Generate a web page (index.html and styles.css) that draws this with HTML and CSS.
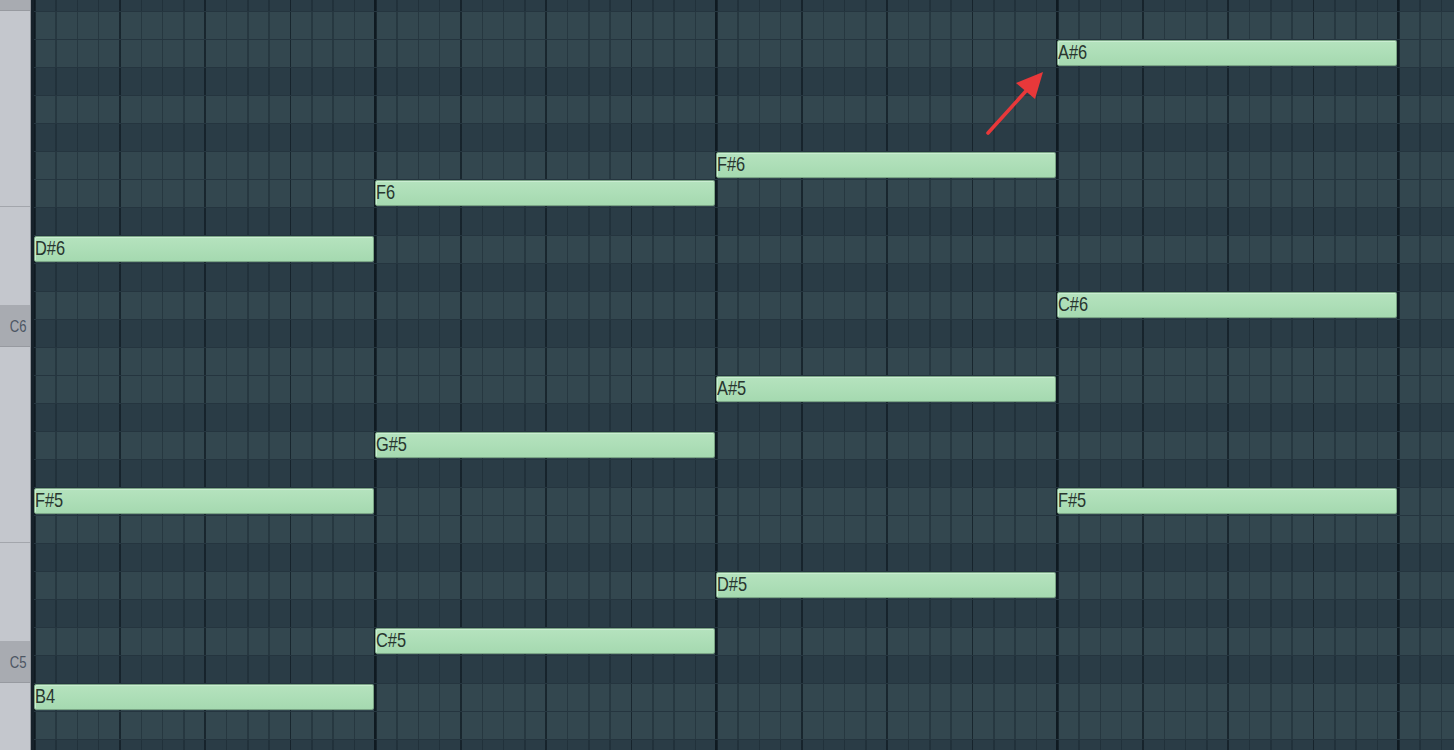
FILE: index.html
```html
<!DOCTYPE html>
<html lang="en">
<head>
<meta charset="utf-8">
<title>Piano roll</title>
<link rel="stylesheet" href="styles.css">
</head>
<body>
<div class="roll">
  <div class="keys">
    <div class="key c-key c-top"></div>
    <div class="key white upper"></div>
    <div class="key white lower"></div>
    <div class="key c-key"><span class="key-label">C6</span></div>
    <div class="key white upper"></div>
    <div class="key white lower"></div>
    <div class="key c-key"><span class="key-label">C5</span></div>
    <div class="key white rest"></div>
  </div>
  <div class="gutter"></div>
  <div class="grid">
    <div class="row dark" style="grid-row:1"></div>
    <div class="row" style="grid-row:2"></div>
    <div class="row" style="grid-row:3"></div>
    <div class="row dark" style="grid-row:4"></div>
    <div class="row" style="grid-row:5"></div>
    <div class="row dark" style="grid-row:6"></div>
    <div class="row" style="grid-row:7"></div>
    <div class="row" style="grid-row:8"></div>
    <div class="row dark" style="grid-row:9"></div>
    <div class="row" style="grid-row:10"></div>
    <div class="row dark" style="grid-row:11"></div>
    <div class="row" style="grid-row:12"></div>
    <div class="row dark" style="grid-row:13"></div>
    <div class="row" style="grid-row:14"></div>
    <div class="row" style="grid-row:15"></div>
    <div class="row dark" style="grid-row:16"></div>
    <div class="row" style="grid-row:17"></div>
    <div class="row dark" style="grid-row:18"></div>
    <div class="row" style="grid-row:19"></div>
    <div class="row" style="grid-row:20"></div>
    <div class="row dark" style="grid-row:21"></div>
    <div class="row" style="grid-row:22"></div>
    <div class="row dark" style="grid-row:23"></div>
    <div class="row" style="grid-row:24"></div>
    <div class="row dark" style="grid-row:25"></div>
    <div class="row" style="grid-row:26"></div>
    <div class="row" style="grid-row:27"></div>
    <div class="row dark" style="grid-row:28"></div>

    <div class="note" style="grid-row:10;grid-column:1"><span>D#6</span></div>
    <div class="note" style="grid-row:19;grid-column:1"><span>F#5</span></div>
    <div class="note" style="grid-row:26;grid-column:1"><span>B4</span></div>

    <div class="note" style="grid-row:8;grid-column:2"><span>F6</span></div>
    <div class="note" style="grid-row:17;grid-column:2"><span>G#5</span></div>
    <div class="note" style="grid-row:24;grid-column:2"><span>C#5</span></div>

    <div class="note" style="grid-row:7;grid-column:3"><span>F#6</span></div>
    <div class="note" style="grid-row:15;grid-column:3"><span>A#5</span></div>
    <div class="note" style="grid-row:22;grid-column:3"><span>D#5</span></div>

    <div class="note" style="grid-row:3;grid-column:4"><span>A#6</span></div>
    <div class="note" style="grid-row:12;grid-column:4"><span>C#6</span></div>
    <div class="note" style="grid-row:19;grid-column:4"><span>F#5</span></div>
  </div>
  <svg class="arrow" width="70" height="76" viewBox="0 0 70 76">
    <line x1="8" y1="69" x2="46" y2="27" stroke="#e8383a" stroke-width="3.6" stroke-linecap="round"/>
    <polygon points="63,8 36,19 55,35" fill="#e8383a"/>
  </svg>
</div>
</body>
</html>
```

FILE: styles.css
```css
html, body {
  margin: 0;
  padding: 0;
  width: 1454px;
  height: 750px;
  overflow: hidden;
  background: #33474f;
}

.roll {
  position: relative;
  display: flex;
  width: 1454px;
  height: 750px;
  overflow: hidden;
}

/* keyboard strip */
.keys {
  flex: 0 0 30px;
  display: flex;
  flex-direction: column;
  background: #c4c7cd;
  border-right: 1px solid #8d9299;
}

.key {
  box-sizing: border-box;
  flex: 0 0 auto;
}

.white {
  background: #c4c7cd;
}

.c-key {
  height: 42px;
  background: #a8abb1;
  border-bottom: 1px solid #979aa0;
  display: flex;
  align-items: center;
  justify-content: flex-end;
  padding-right: 4px;
  padding-top: 2px;
}

.c-top {
  height: 11px;
  padding-top: 0;
}

.upper {
  height: 196px;
  border-bottom: 1px solid #a3a6ac;
}

.lower {
  height: 98px;
}

.rest {
  flex: 1 1 auto;
}

.key-label {
  display: inline-block;
  font-family: "Liberation Sans", Arial, sans-serif;
  font-size: 16px;
  line-height: 16px;
  color: #4d5663;
  transform: scaleX(0.82);
  transform-origin: right center;
}

.gutter {
  flex: 0 0 3px;
  background: #16212a;
}

/* note grid */
.grid {
  flex: 1 1 auto;
  display: grid;
  grid-template-columns: repeat(5, 341px);
  grid-template-rows: repeat(28, 28px);
  margin-top: -17px;
  overflow: hidden;
}

.row {
  grid-column: 1 / -1;
  box-sizing: border-box;
  border-top: 1px solid #25353f;
  background-color: #33474f;
  background-image:
    repeating-linear-gradient(to right, #0f1a21 0 1px, transparent 1px 340px, #0f1a21 340px 341px),
    repeating-linear-gradient(to right, rgba(14, 24, 31, 0.55) 0 1.5px, transparent 1.5px 85.25px),
    repeating-linear-gradient(to right, rgba(20, 33, 42, 0.4) 0 1.5px, transparent 1.5px 21.3125px);
}

.row.dark {
  background-color: #2a3c46;
}

.note {
  position: relative;
  z-index: 1;
  margin: 1px 1px 1px 0;
  box-sizing: border-box;
  border: 1px solid #7aa485;
  border-radius: 2px;
  background: linear-gradient(#b5e3be, #a5d9b0);
  box-shadow: inset 1px 1px 0 #cbedd2;
  overflow: hidden;
  white-space: nowrap;
}

.note span {
  display: inline-block;
  font-family: "Liberation Sans", Arial, sans-serif;
  font-size: 21px;
  line-height: 22px;
  color: #28352f;
  transform: scaleX(0.78);
  transform-origin: left center;
}

.arrow {
  position: absolute;
  left: 980px;
  top: 64px;
  pointer-events: none;
  z-index: 2;
}
```
